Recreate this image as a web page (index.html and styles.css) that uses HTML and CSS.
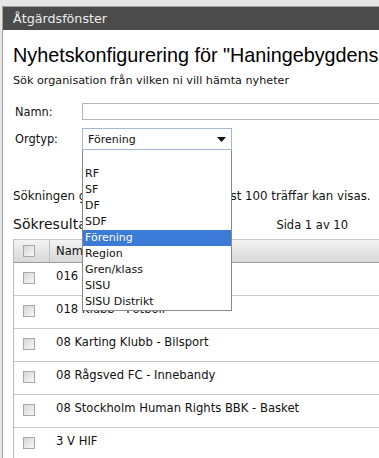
FILE: index.html
```html
<!DOCTYPE html>
<html lang="sv">
<head>
<meta charset="utf-8">
<title>Åtgärdsfönster</title>
<link rel="stylesheet" href="styles.css">
</head>
<body>
<div class="frame">
  <div class="window">
    <div class="titlebar">Åtgärdsfönster</div>
    <div class="content">
      <h1 class="title">Nyhetskonfigurering för "Haningebygdens Ryttarförening"</h1>
      <p class="intro">Sök organisation från vilken ni vill hämta nyheter</p>

      <div class="form-row">
        <label class="label">Namn:</label>
        <div class="input"></div>
      </div>
      <div class="form-row orgtyp">
        <label class="label">Orgtyp:</label>
        <div class="select-wrap">
          <div class="select">
            <span>Förening</span>
            <svg class="arrow" width="9" height="5" viewBox="0 0 9 5"><path d="M0 0H9L4.5 5Z" fill="#111"/></svg>
          </div>
          <ul class="dropdown">
            <li>&nbsp;</li>
            <li>RF</li>
            <li>SF</li>
            <li>DF</li>
            <li>SDF</li>
            <li class="active">Förening</li>
            <li>Region</li>
            <li>Gren/klass</li>
            <li>SISU</li>
            <li>SISU Distrikt</li>
          </ul>
        </div>
      </div>

      <p class="notice">Sökningen gav 500 träffar men endast 100 träffar kan visas.</p>

      <div class="result-head">
        <h2 class="result-title">Sökresultat</h2>
        <span class="pager">Sida 1 av 10</span>
      </div>

      <div class="table">
        <div class="thead">
          <div class="cell-check"><span class="checkbox"></span></div>
          <div class="cell-name">Namn</div>
        </div>
        <div class="row"><div class="cell-check"><span class="checkbox"></span></div><div class="cell-name">016 Innebandy IF - Innebandy</div></div>
        <div class="row"><div class="cell-check"><span class="checkbox"></span></div><div class="cell-name">018 Klubb - Fotboll</div></div>
        <div class="row"><div class="cell-check"><span class="checkbox"></span></div><div class="cell-name">08 Karting Klubb - Bilsport</div></div>
        <div class="row"><div class="cell-check"><span class="checkbox"></span></div><div class="cell-name">08 Rågsved FC - Innebandy</div></div>
        <div class="row"><div class="cell-check"><span class="checkbox"></span></div><div class="cell-name">08 Stockholm Human Rights BBK - Basket</div></div>
        <div class="row"><div class="cell-check"><span class="checkbox"></span></div><div class="cell-name">3 V HIF</div></div>
      </div>
    </div>
  </div>
</div>
</body>
</html>
```

FILE: styles.css
```css
html, body {
  margin: 0;
  padding: 0;
  overflow: hidden;
  background: #e6e6e6;
}

.frame {
  padding: 6px 0 0 2px;
  height: 458px;
  box-sizing: border-box;
}

.window {
  border-top: 1px solid #a0a0a0;
  border-left: 1px solid #a0a0a0;
  background: #fff;
  height: 100%;
  width: 420px;
}

.titlebar {
  height: 23px;
  line-height: 23px;
  background: #4b4b4b;
  color: #ececec;
  font-family: "DejaVu Sans", Verdana, sans-serif;
  font-size: 12.7px;
  padding-left: 10px;
}

.content {
  padding-left: 10px;
  font-family: "DejaVu Sans", Verdana, sans-serif;
  font-size: 11.2px;
  color: #111;
}

.title {
  font-family: "Liberation Sans", Arial, sans-serif;
  font-weight: normal;
  font-size: 19.8px;
  white-space: nowrap;
  margin: 13px 0 0 0;
  line-height: 24px;
  color: #000;
}

.intro {
  margin: 7px 0 0 0;
  line-height: 14px;
}

.form-row {
  display: flex;
  align-items: center;
  height: 17px;
  margin-top: 15px;
}

.form-row.orgtyp {
  margin-top: 8px;
  height: 22px;
}

.label {
  width: 67px;
  padding-left: 2px;
  flex: none;
  font-size: 11.4px;
}

.input {
  width: 320px;
  height: 15px;
  border: 1px solid #b5b5b5;
}

.select-wrap {
  position: relative;
}

.select {
  border: 1px solid #a3b8d2;
  display: flex;
  align-items: center;
  justify-content: space-between;
  padding: 0 5px 0 5px;
  box-sizing: border-box;
  width: 150px;
  height: 22px;
  font-size: 11px;
  background: #fff;
}

.arrow {
  display: block;
}

.dropdown {
  position: absolute;
  left: 0;
  top: 22px;
  width: 150px;
  box-sizing: border-box;
  margin: 0;
  padding: 0;
  list-style: none;
  border: 1px solid #8a8a8a;
  border-top: none;
  background: #fff;
  z-index: 5;
  font-size: 11px;
}

.dropdown li {
  height: 16px;
  line-height: 16px;
  padding-left: 2px;
  color: #111;
}

.dropdown li.active {
  background: #3b7ad6;
  color: #fff;
}

.notice {
  margin: 39px 0 0 0;
  line-height: 14px;
  font-size: 11.8px;
  white-space: nowrap;
}

.result-head {
  display: flex;
  align-items: baseline;
  width: 335px;
  margin-top: 12px;
  height: 18px;
}

.result-title {
  font-family: "DejaVu Sans", Verdana, sans-serif;
  font-weight: normal;
  font-size: 14px;
  margin: 0;
  line-height: 18px;
}

.pager {
  margin-left: auto;
  font-size: 11.5px;
}

.table {
  margin-top: 6px;
  width: 400px;
  border-left: 1px solid #b8b8b8;
  border-top: 1px solid #c8c8c8;
}

.thead {
  display: flex;
  height: 22px;
  background: linear-gradient(#f3f3f3, #d8d8d8);
  border-bottom: 1px solid #9a9a9a;
  align-items: center;
}

.thead .cell-check {
  border-right: 1px solid #c0c0c0;
  align-self: stretch;
  display: flex;
  align-items: center;
}

.cell-check {
  width: 36px;
  flex: none;
  padding-left: 9px;
  box-sizing: border-box;
}

.cell-name {
  padding-left: 6px;
  font-size: 11.6px;
}

.checkbox {
  display: block;
  width: 12px;
  height: 12px;
  border: 1px solid #a8a8a8;
  background: linear-gradient(135deg, #d6d6d6, #f7f7f7);
  box-sizing: border-box;
}

.row {
  display: flex;
  height: 32px;
  border-bottom: 1px solid #c8c8c8;
  align-items: flex-start;
}

.row .cell-check {
  padding-top: 9px;
}

.row .cell-name {
  padding-top: 6px;
  line-height: 14px;
}
```
